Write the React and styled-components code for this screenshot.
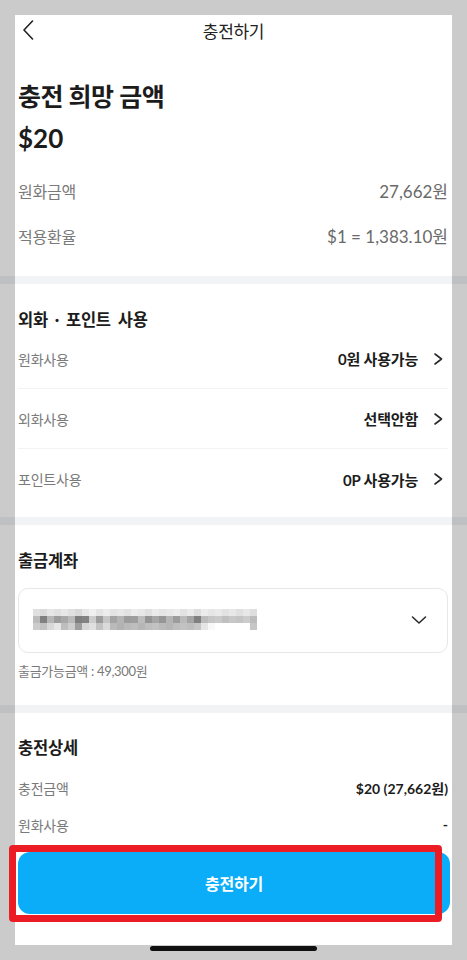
import React from "react";
import styled, { createGlobalStyle } from "styled-components";

const GlobalStyle = createGlobalStyle`
  html, body {
    margin: 0;
    padding: 0;
    background: #cbcbcb;
  }
  body {
    font-family: "Lato", "Noto Sans CJK KR", sans-serif;
    color: #222;
  }
`;

const Page = styled.div`
  width: 467px;
  min-height: 960px;
  padding-top: 15px;
  box-sizing: border-box;
`;

const Screen = styled.div`
  margin: 0 15px;
  height: 930px;
  background: #fff;
  display: flex;
  flex-direction: column;
`;

const Header = styled.header`
  height: 30px;
  display: grid;
  grid-template-columns: 40px 1fr 40px;
  align-items: center;
  padding: 0 3px;
`;

const BackButton = styled.button`
  border: 0;
  background: none;
  padding: 0 0 0 4px;
  display: flex;
  align-items: center;
  height: 30px;
  cursor: pointer;
`;

const HeaderTitle = styled.h1`
  margin: 0;
  text-align: center;
  font-size: 17px;
  font-weight: 400;
  color: #222;
  letter-spacing: -0.3px;
`;

const Section = styled.section`
  padding: ${(p) => p.$pad || "27px 4px 0 3px"};
  display: flex;
  flex-direction: column;
`;

const BigTitle = styled.h2`
  margin: 0;
  font-size: 25px;
  line-height: 34px;
  font-weight: 700;
  letter-spacing: -0.5px;
  color: #1c1c1c;
`;

const BigAmount = styled.div`
  margin-top: 8px;
  font-size: 26px;
  line-height: 34px;
  font-weight: 700;
  color: #1c1c1c;
`;

const SectionTitle = styled.h3`
  margin: 0;
  font-size: 16.5px;
  line-height: 18px;
  font-weight: 700;
  color: #1c1c1c;
  letter-spacing: -0.2px;
  word-spacing: ${(p) => (p.$wide ? "3px" : "0")};
`;

const List = styled.div`
  margin-top: ${(p) => p.$top || 0}px;
  display: flex;
  flex-direction: column;
`;

const Row = styled.div`
  height: ${(p) => p.$h}px;
  box-sizing: border-box;
  display: flex;
  align-items: center;
  justify-content: space-between;
  border-bottom: ${(p) => (p.$line ? "1px solid #f3f3f3" : "0")};
  &:last-child {
    border-bottom: 0;
  }
`;

const Label = styled.span`
  font-size: ${(p) => p.$size || 14}px;
  color: #7a7a7a;
  letter-spacing: -0.2px;
`;

const Value = styled.span`
  font-size: ${(p) => p.$size || 15}px;
  font-weight: ${(p) => (p.$bold ? 700 : 400)};
  color: ${(p) => (p.$bold ? "#1c1c1c" : "#6a6a6a")};
  display: flex;
  align-items: center;
`;

const LinkValue = styled.span`
  display: flex;
  align-items: center;
  gap: 14px;
  padding-right: 2px;
  font-size: 15px;
  font-weight: 700;
  color: #1c1c1c;
  letter-spacing: -0.2px;
`;

const Divider = styled.div`
  height: 8px;
  margin: 0 -15px;
  background: linear-gradient(
    to right,
    #bfc0c2 15px,
    #f1f3f5 15px,
    #f1f3f5 calc(100% - 15px),
    #bfc0c2 calc(100% - 15px)
  );
`;

const Select = styled.div`
  margin-top: 18px;
  height: 65px;
  box-sizing: border-box;
  border: 1px solid #e7e7e7;
  border-radius: 10px;
  display: flex;
  align-items: center;
  justify-content: space-between;
  padding: 0 20px 2px 14px;
`;

const Note = styled.p`
  margin: 10px 0 0;
  font-size: 13px;
  line-height: 16px;
  color: #7a7a7a;
  letter-spacing: -0.3px;
`;

const ButtonWrap = styled.div`
  position: relative;
  margin: 9px -2px 0 0;
`;

const PrimaryButton = styled.button`
  width: 100%;
  height: 62px;
  border: 0;
  border-radius: 12px;
  background: #0badf9;
  color: #fff;
  font-family: inherit;
  font-size: 16px;
  font-weight: 700;
  letter-spacing: -0.2px;
  cursor: pointer;
`;

const Highlight = styled.div`
  position: absolute;
  top: -7px;
  left: -9px;
  right: 8px;
  bottom: -8px;
  border: 7px solid #ec1c24;
  border-radius: 4px;
  pointer-events: none;
`;

const HomeBar = styled.div`
  width: 167px;
  height: 5px;
  margin: 1px auto 0;
  border-radius: 3px;
  background: #111;
`;

const ChevronRight = () => (
  <svg width="14" height="16" viewBox="0 0 14 16" fill="none">
    <path d="M3 3 L9.5 8 L3 13" stroke="#2a2a2a" strokeWidth="1.6" strokeLinecap="round" strokeLinejoin="round" />
  </svg>
);

const ChevronDown = () => (
  <svg width="16" height="10" viewBox="0 0 16 10" fill="none">
    <path d="M1.5 2 L8 8 L14.5 2" stroke="#2a2a2a" strokeWidth="1.6" strokeLinecap="round" strokeLinejoin="round" />
  </svg>
);

const BackIcon = () => (
  <svg width="14" height="20" viewBox="0 0 14 20" fill="none">
    <path d="M10.5 1 L2 10 L10.5 19" stroke="#222" strokeWidth="1.6" strokeLinecap="round" strokeLinejoin="round" />
  </svg>
);

// blurred account number, drawn as a pixel mosaic
const mosaic = [
  ["e0", "da", "e6", "e0", "e8", "e0", "d8", "e6", "f0", "e4", "ec", "e4", "e8", "e2", "ec", "e8", "e0", "ea", "e4", "e8", "ec", "e2", "ea", "de", "ec", "e6", "ea", "e2", "e8", "e0", "e8", "de"],
  ["bc", "80", "b6", "9c", "a8", "ba", "7e", "82", "cc", "9c", "c6", "a4", "b4", "9c", "9e", "bc", "94", "a6", "96", "b4", "9c", "ba", "a4", "80", "bc", "c6", "ca", "c0", "c8", "c4", "cc", "bc"],
  ["cc", "c2", "d8", "e6", "be", "ce", "9e", "d6", "e0", "c2", "da", "ba", "b2", "ba", "be", "b6", "be", "c2", "ba", "b6", "be", "c2", "be", "c6", "e6", "f8", "ff", "ff", "ff", "ff", "ff", "c6"],
];

const Mosaic = () => (
  <svg width="224" height="21" viewBox="0 0 224 21">
    {mosaic.map((row, r) =>
      row.map((c, i) => (
        <rect key={`${r}-${i}`} x={i * 7} y={r * 7} width="7" height="7" fill={`#${c}${c}${c}`} />
      ))
    )}
  </svg>
);

const usage = [
  { label: "원화사용", value: "0원 사용가능" },
  { label: "외화사용", value: "선택안함" },
  { label: "포인트사용", value: "0P 사용가능" },
];

export default function App() {
  return (
    <Page>
      <GlobalStyle />
      <Screen>
        <Header>
          <BackButton aria-label="뒤로">
            <BackIcon />
          </BackButton>
          <HeaderTitle>충전하기</HeaderTitle>
          <span />
        </Header>

        <Section $pad="34px 4px 18px 3px">
          <BigTitle>충전 희망 금액</BigTitle>
          <BigAmount>$20</BigAmount>
          <List $top={13}>
            <Row $h={45}>
              <Label $size={16}>원화금액</Label>
              <Value $size={17}>27,662원</Value>
            </Row>
            <Row $h={45}>
              <Label $size={16}>적용환율</Label>
              <Value $size={17}>$1 = 1,383.10원</Value>
            </Row>
          </List>
        </Section>

        <Divider />

        <Section $pad="27px 4px 8px 3px">
          <SectionTitle $wide>외화 · 포인트 사용</SectionTitle>
          <List>
            {usage.map((u) => (
              <Row key={u.label} $h={60} $line>
                <Label>{u.label}</Label>
                <LinkValue>
                  {u.value}
                  <ChevronRight />
                </LinkValue>
              </Row>
            ))}
          </List>
        </Section>

        <Divider />

        <Section $pad="27px 4px 26px 3px">
          <SectionTitle>출금계좌</SectionTitle>
          <Select>
            <Mosaic />
            <ChevronDown />
          </Select>
          <Note>출금가능금액 : 49,300원</Note>
        </Section>

        <Divider />

        <Section $pad="26px 4px 0 3px">
          <SectionTitle>충전상세</SectionTitle>
          <List $top={12}>
            <Row $h={37}>
              <Label>충전금액</Label>
              <Value $bold $size={14}>$20 (27,662원)</Value>
            </Row>
            <Row $h={37}>
              <Label>원화사용</Label>
              <Value $bold $size={14}>-</Value>
            </Row>
          </List>
          <ButtonWrap>
            <PrimaryButton>충전하기</PrimaryButton>
            <Highlight />
          </ButtonWrap>
        </Section>
      </Screen>
      <HomeBar />
    </Page>
  );
}
